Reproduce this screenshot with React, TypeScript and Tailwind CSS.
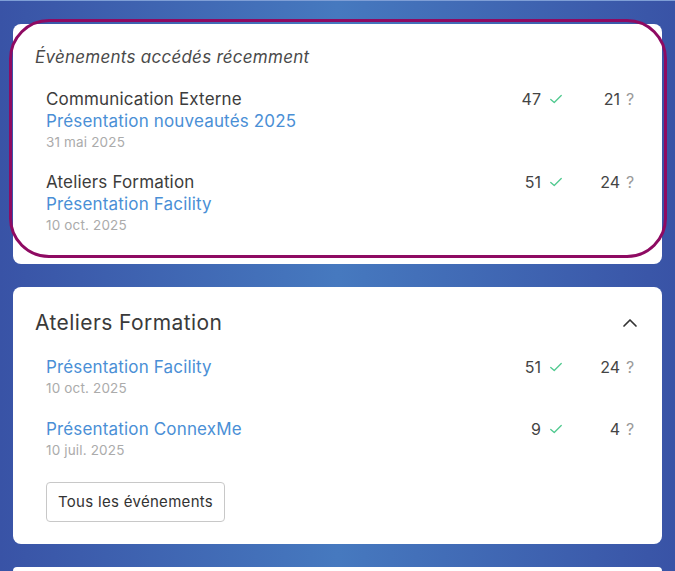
import { ChevronUp } from 'lucide-react';

interface EventRow {
    group?: string;
    title: string;
    date: string;
    present: number;
    pending: number;
}

const recentEvents: EventRow[] = [
    {
        group: 'Communication Externe',
        title: 'Présentation nouveautés 2025',
        date: '31 mai 2025',
        present: 47,
        pending: 21,
    },
    {
        group: 'Ateliers Formation',
        title: 'Présentation Facility',
        date: '10 oct. 2025',
        present: 51,
        pending: 24,
    },
];

const formationEvents: EventRow[] = [
    { title: 'Présentation Facility', date: '10 oct. 2025', present: 51, pending: 24 },
    { title: 'Présentation ConnexMe', date: '10 juil. 2025', present: 9, pending: 4 },
];

function Counters({ present, pending }: { present: number; pending: number }) {
    return (
        <div className="flex shrink-0 items-center text-[16px] leading-[22px] text-[#444]">
            <div className="flex w-[73px] items-center justify-end gap-[8px]">
                <span>{present}</span>
                <svg
                    viewBox="0 0 16 16"
                    className="h-[14px] w-[14px]"
                    fill="none"
                    stroke="#4fc98f"
                    strokeWidth="1.5"
                    strokeLinecap="round"
                    strokeLinejoin="round"
                >
                    <path d="M2 8.5l4 3.5 8-8" />
                </svg>
            </div>
            <div className="flex w-[73px] items-center justify-end gap-[6px]">
                <span>{pending}</span>
                <span className="w-[10px] text-[16px] text-[#9a9a9a]">?</span>
            </div>
        </div>
    );
}

function EventItem({ event }: { event: EventRow }) {
    return (
        <div className="flex items-start justify-between pl-[11px]">
            <div className="flex flex-col tracking-[0.01em]">
                {event.group ? (
                    <span className="text-[17px] leading-[22px] text-[#3c3c3c]">{event.group}</span>
                ) : null}
                <span className="text-[17px] leading-[22px] text-[#4a8fd6]">{event.title}</span>
                <span className="text-[13.5px] leading-[20px] text-[#ababab]">{event.date}</span>
            </div>
            <Counters present={event.present} pending={event.pending} />
        </div>
    );
}

export default function App() {
    return (
        <div
            className="relative flex h-[571px] flex-col gap-[23px] overflow-hidden border-t border-[#7e9ed6] bg-[linear-gradient(90deg,#3953a6_0%,#4679bf_50%,#3953a6_100%)] px-[13px] pt-[23px]"
            style={{ fontFamily: 'Inter, "Noto Sans", sans-serif' }}
        >
            <section className="rounded-[8px] bg-white pb-[29px] pl-[22px] pr-[26px] pt-[21px]">
                <h2 className="text-[17px] leading-[24px] italic tracking-[0.015em] text-[#4a4a4a]">
                    Évènements accédés récemment
                </h2>
                <div className="mt-[19px] flex flex-col gap-[19px]">
                    {recentEvents.map((event) => (
                        <EventItem key={event.title} event={event} />
                    ))}
                </div>
            </section>

            <section className="rounded-[8px] bg-white pb-[22px] pl-[22px] pr-[26px] pt-[22px]">
                <div className="flex items-center justify-between">
                    <h2 className="text-[21px] leading-[28px] tracking-[0.02em] text-[#3a3a3a]">
                        Ateliers Formation
                    </h2>
                    <ChevronUp className="mr-[-6px] h-[24px] w-[24px] text-[#333]" strokeWidth={1.7} />
                </div>
                <div className="mt-[19px] flex flex-col gap-[20px]">
                    {formationEvents.map((event) => (
                        <EventItem key={event.title} event={event} />
                    ))}
                </div>
                <div className="mt-[22px] pl-[11px]">
                    <button
                        type="button"
                        className="h-[40px] rounded-[4px] border border-[#c8c8c8] bg-white px-[11px] text-[15px] tracking-[0.02em] text-[#333]"
                    >
                        Tous les événements
                    </button>
                </div>
            </section>

            <section className="h-[40px] rounded-t-[8px] bg-white" />

            <div className="pointer-events-none absolute left-[9px] top-[18px] h-[239px] w-[658px] rounded-[40px] border-[3px] border-[#8e0a62]" />
        </div>
    );
}
